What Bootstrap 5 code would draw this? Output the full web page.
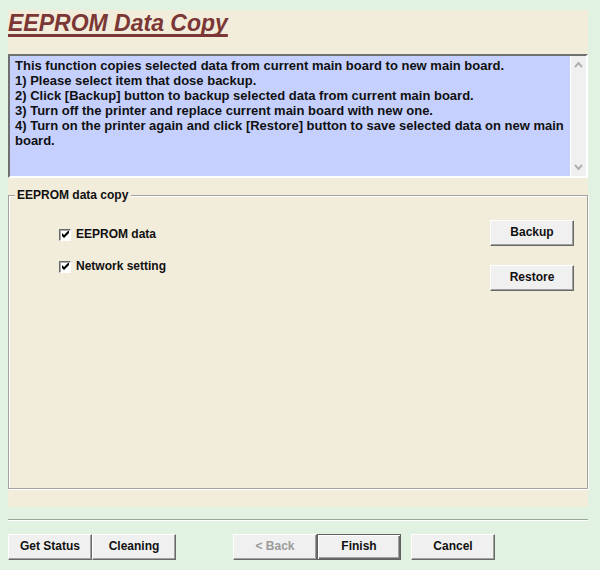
<!DOCTYPE html>
<html lang="en">
<head>
<meta charset="utf-8">
<meta name="viewport" content="width=device-width, initial-scale=1">
<title>EEPROM Data Copy</title>
<link rel="stylesheet" href="https://cdn.jsdelivr.net/npm/bootstrap@5.3.0/dist/css/bootstrap.min.css">
<style>
body { background: #e1f2e2; color: #101010; font: bold 12px/15px "Liberation Sans", Arial, sans-serif; }
.page { padding: 10px 12px 10px 8px; }
.panel { background: #f2ecda; padding-bottom: 18px; }
.title { color: #7b3735; font-size: 23px; line-height: 26px; font-weight: bold; font-style: italic; text-decoration: underline; text-decoration-thickness: 3px; text-underline-offset: 3px; text-decoration-skip-ink: none; margin-bottom: 18px; }
.info { border: 2px solid; border-color: #707070 #fff #fff #707070; background: #c5d0ff; margin-bottom: 10px; }
.info textarea { background: transparent; color: inherit; font: inherit; font-size: 13px; border: 0; padding: 2px 0 2px 5px; height: 120px; resize: none; outline: 0; overflow: hidden; }
.scroller { width: 16px; background: #f0f0f0; border-left: 1px solid #fff; }
.scroller button { border: 0; background: none; padding: 0; height: 17px; line-height: 0; }
.group { border: 1px solid #a3a29c; box-shadow: 1px 1px #fff, inset 1px 1px #fff; padding: 0 13px 0 50px; }
.group legend { font-size: 12px; line-height: 15px; font-weight: bold; margin: 0 0 0 -44px; padding: 0 3px 0 2px; background: #f2ecda; }
.options { gap: 17px; padding-top: 24px; }
.option { gap: 5px; }
.option input { appearance: none; width: 12px; height: 12px; margin: 0; border: 1px solid; border-color: #696969 #fff #fff #696969; box-shadow: inset 1px 1px #a9a9a9; background: #fff; }
.option input:checked { background: #fff url("data:image/svg+xml,%3Csvg xmlns='http://www.w3.org/2000/svg' viewBox='0 0 9 9'%3E%3Cpath d='M1 3v3l2 2 5-5V0L3 5z'/%3E%3C/svg%3E") center / 9px 9px no-repeat; }
.actions { gap: 19px; padding-top: 17px; }
.push { width: 84px; height: 26px; padding: 0 0 2px; border: 1px solid; border-color: #fff #696969 #696969 #fff; box-shadow: inset -1px -1px #a0a0a0; background: #f0f0f0; color: #101010; font: inherit; }
.push:disabled { color: #9b9b9b; }
.push-default { border: 1px solid #606060; box-shadow: inset 1px 1px #fff, inset -1px -1px #696969, inset -2px -2px #a0a0a0; }
.rule { border: 0; border-top: 1px solid #9aa69b; border-bottom: 1px solid #fff; opacity: 1; margin: 12px 0 13px; }
.wizard { margin: 0 10px 0 57px; }
</style>
<script src="https://cdn.jsdelivr.net/npm/bootstrap@5.3.0/dist/js/bootstrap.bundle.min.js"></script>
</head>
<body>
<main class="page d-flex flex-column min-vh-100">
  <section class="panel d-flex flex-column flex-grow-1">
    <h1 class="title">EEPROM Data Copy</h1>
    <div class="info d-flex">
      <textarea class="flex-grow-1" readonly aria-label="Instructions">This function copies selected data from current main board to new main board.
1) Please select item that dose backup.
2) Click [Backup] button to backup selected data from current main board.
3) Turn off the printer and replace current main board with new one.
4) Turn on the printer again and click [Restore] button to save selected data on new main board.</textarea>
      <div class="scroller d-flex flex-column justify-content-between">
        <button type="button" aria-label="Scroll up"><svg width="9" height="7" viewBox="0 0 9 7" fill="none" stroke="#b0b0b0" stroke-width="2"><path d="M1 6l3.500-4L8 6"/></svg></button>
        <button type="button" aria-label="Scroll down"><svg width="9" height="7" viewBox="0 0 9 7" fill="none" stroke="#b0b0b0" stroke-width="2"><path d="M1 1l3.500 4L8 1"/></svg></button>
      </div>
    </div>
    <fieldset class="group flex-grow-1">
      <legend class="float-none w-auto">EEPROM data copy</legend>
      <div class="d-flex justify-content-between align-items-start">
        <div class="options d-flex flex-column">
          <div class="option d-flex align-items-center"><input type="checkbox" id="eeprom" checked><label for="eeprom">EEPROM data</label></div>
          <div class="option d-flex align-items-center"><input type="checkbox" id="network" checked><label for="network">Network setting</label></div>
        </div>
        <div class="actions d-flex flex-column">
          <button class="push" type="button">Backup</button>
          <button class="push" type="button">Restore</button>
        </div>
      </div>
    </fieldset>
  </section>
  <hr class="rule">
  <footer class="d-flex">
    <div class="d-flex">
      <button class="push" type="button">Get Status</button>
      <button class="push" type="button">Cleaning</button>
    </div>
    <div class="wizard d-flex">
      <button class="push" type="button" disabled>&lt; Back</button>
      <button class="push push-default" type="button">Finish</button>
    </div>
    <button class="push" type="button">Cancel</button>
  </footer>
</main>
</body>
</html>
